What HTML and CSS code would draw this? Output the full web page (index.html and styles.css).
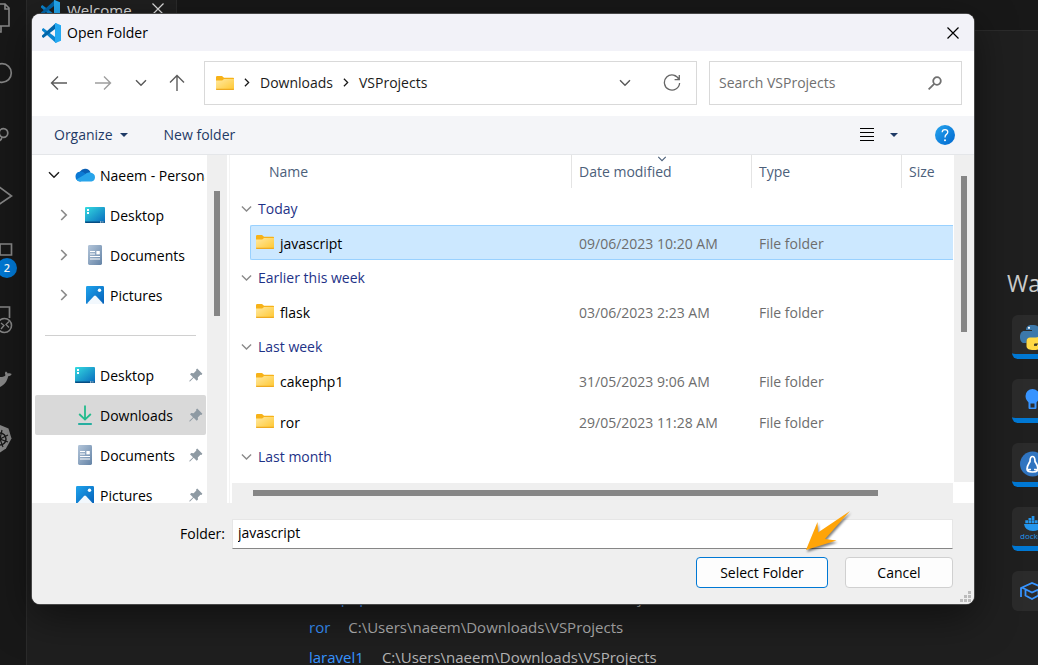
FILE: index.html
```html
<!DOCTYPE html>
<html lang="en">
<head>
	<meta charset="UTF-8">
	<title>Open Folder</title>
	<link rel="stylesheet" href="styles.css">
</head>
<body>
	<!-- shared icons -->
	<svg class="sprite" aria-hidden="true">
		<defs>
			<linearGradient id="gFolder" x1="0" y1="0" x2="1" y2="1"><stop offset="0" stop-color="#ffe9a2"/><stop offset="1" stop-color="#ffc730"/></linearGradient>
			<linearGradient id="gDesk" x1="0" y1="0" x2="1" y2="1"><stop offset="0" stop-color="#35dbe0"/><stop offset="1" stop-color="#0768bd"/></linearGradient>
			<linearGradient id="gDoc" x1="0" y1="0" x2="1" y2="1"><stop offset="0" stop-color="#b4c6da"/><stop offset="1" stop-color="#6483a6"/></linearGradient>
			<linearGradient id="gPic" x1="0" y1="0" x2="1" y2="1"><stop offset="0" stop-color="#1fa3ec"/><stop offset="1" stop-color="#0560b8"/></linearGradient>
			<linearGradient id="gHelp" x1="0" y1="0" x2="1" y2="1"><stop offset="0" stop-color="#27a5ee"/><stop offset="1" stop-color="#0067cf"/></linearGradient>
		</defs>
		<symbol id="vscode" viewBox="0 0 20 20">
			<path d="M1 6.2 2.3 5 16 15.6V19l-1.4.8L1 7.4z" fill="#0a84cf"/>
			<path d="M1 13.8 2.3 15 16 4.4V1L14.6.2 1 12.6z" fill="#0065a9"/>
			<path d="M14.6.1 20 2.2v15.6l-5.4 2.1c-.6 0-.9-.3-.6-.9V1c-.3-.6 0-.9.6-.9z" fill="#24a9f2"/>
		</symbol>
		<symbol id="folder" viewBox="0 0 18 14">
			<path d="M0 1.2Q0 0 1.2 0H6l2 1.8h9.2q.8 0 .8.8V5H0z" fill="#f7b218"/>
			<path d="M0 4.6h6.2L8 3h10v10q0 1-1 1H1q-1 0-1-1z" fill="url(#gFolder)"/>
			<path d="M0 12.8h18v.4q0 .8-.8.8H.8Q0 14 0 13.2z" fill="#eeaa22"/>
		</symbol>
		<symbol id="desktop" viewBox="0 0 20 20">
			<rect y="2" width="20" height="16" rx="1" fill="url(#gDesk)"/>
			<path d="M0 16.400h20v.6q0 1-1 1H1q-1 0-1-1z" fill="#064c82"/>
			<path d="M2 4h2v2H2zM2 7h2v2H2zM15 16.600h1.400v1H15zM17.400 16.600h1v1h-1z" fill="#fff"/>
		</symbol>
		<symbol id="document" viewBox="0 0 20 20">
			<rect x="3" y="0" width="14" height="20" rx="1.4" fill="url(#gDoc)"/>
			<path d="M5 6.500h5M5 9h5M5 11.500h10M5 14h10" stroke="#fff" stroke-width="1.100"/>
			<rect x="11.400" y="6" width="3.400" height="3.400" fill="#fff"/>
		</symbol>
		<symbol id="picture" viewBox="0 0 20 20">
			<rect x="1" y="1" width="18" height="18" rx="1.200" fill="url(#gPic)"/>
			<path d="M2 18.600 9 11q1-.9 2 0l7 7.600q-.3.4-1 .4H3q-.7 0-1-.4z" fill="#f2f8fd"/>
			<circle cx="14.500" cy="5.300" r="1.700" fill="#fff"/>
		</symbol>
		<symbol id="download" viewBox="0 0 20 20">
			<path d="M10 .5v13.600M4.200 9l5.800 5.600L15.800 9" fill="none" stroke="#22bb8c" stroke-width="1.800"/>
			<path d="M3.200 19h13.600" stroke="#12aa9a" stroke-width="1.800"/>
		</symbol>
		<symbol id="pin" viewBox="0 0 14 14">
			<path d="M8.200.6 13.400 5.800 12.400 7l-1-.2L8.800 9.400l.2 2.200-1.300 1.200-3-3L1 13.400H.4V12.800L4 9.200l-3-3L2.300 5l2.400.2L7.300 2.600 7.100 1.600z" fill="#8e9aa3"/>
		</symbol>
		<symbol id="chevDown" viewBox="0 0 12 8">
			<path d="M1 1.200 6 6.200 11 1.200" fill="none" stroke="currentColor" stroke-width="1.500"/>
		</symbol>
		<symbol id="chevRight" viewBox="0 0 8 12">
			<path d="M1.200 1 6.200 6 1.200 11" fill="none" stroke="currentColor" stroke-width="1.700"/>
		</symbol>
		<symbol id="caret" viewBox="0 0 8 4"><path d="M0 0h8L4 4z" fill="#1f3a66"/></symbol>
		<symbol id="cross" viewBox="0 0 12 12"><path d="M.5.5l11 11M11.500.5l-11 11" stroke="currentColor" stroke-width="1.200"/></symbol>
	</svg>

	<div class="window">
		<nav class="activity" aria-label="Activity bar">
			<svg viewBox="0 0 26 61"><path d="M0 21h5l4 4v18H0M5 21v5h4M1 43v6H0" fill="none" stroke="#868686" stroke-width="1.600"/></svg>
			<svg viewBox="0 0 26 61"><circle cx="2" cy="29" r="9.300" fill="none" stroke="#868686" stroke-width="1.700"/></svg>
			<svg viewBox="0 0 26 61"><circle cx="3.500" cy="28" r="4.300" fill="none" stroke="#868686" stroke-width="1.700"/><path d="M2 32q-.5 3-3 4" fill="none" stroke="#868686" stroke-width="1.700"/></svg>
			<svg viewBox="0 0 26 61"><path d="M-2 20 11.500 30-2 39" fill="none" stroke="#868686" stroke-width="1.700"/></svg>
			<svg viewBox="0 0 26 61"><path d="M0 17h11.500v11H0z" fill="none" stroke="#868686" stroke-width="1.700"/></svg>
			<svg viewBox="0 0 26 61"><path d="M0 19h9.500v11" fill="none" stroke="#868686" stroke-width="1.700"/><circle cx="4.500" cy="37.500" r="7" fill="#181818" stroke="#868686" stroke-width="1.600"/><path d="M1 35l3 2.500L1 41M9 33.500 6 36.500l3 3" fill="none" stroke="#868686" stroke-width="1.300"/></svg>
			<svg viewBox="0 0 26 61"><path d="M0 28c3 0 5-.5 5.500-2-1-1.500-.5-3 .5-3.500 1 .5 1.500 1.200 1.700 2 1.500-.5 3-.2 4 .5-.8 1.700-2 2.200-3.500 2.200C7 33 4 36 0 38z" fill="#868686"/></svg>
			<svg viewBox="0 0 26 61"><path d="M0 15l8.500 3.500 3 10-5.500 10-6 4z" fill="#868686"/><circle cx="0" cy="29" r="6" fill="none" stroke="#181818" stroke-width="1.500"/><path d="M0 29l8-4M0 29l8 3M0 29l3 8M0 29l2-9" stroke="#181818" stroke-width="1.200"/></svg>
			<span class="badge">2</span>
		</nav>
		<div class="editor">
			<header class="tabs">
				<div class="tab">
					<svg class="tab-logo"><use href="#vscode"/></svg>
					<span>Welcome</span>
					<button class="tab-close" aria-label="Close tab"><svg width="12" height="12"><use href="#cross"/></svg></button>
				</div>
			</header>
			<main class="welcome">
				<ul class="recent">
					<li><a href="#">cakephp1</a><span>C:\Users\naeem\Downloads\VSProjects</span></li>
					<li><a href="#">ror</a><span>C:\Users\naeem\Downloads\VSProjects</span></li>
					<li><a href="#">laravel1</a><span>C:\Users\naeem\Downloads\VSProjects</span></li>
				</ul>
				<section class="walk">
					<h2>Walkthroughs</h2>
					<div class="card started"><svg viewBox="0 0 30 30"><path d="M6 7c0-3.500 2-5 6-5s7 1 7 4v6c0 2-1 3-3 3h-6c-2.500 0-3.500 1.500-3.500 3.500V20H4c-2 0-4-2-4-6s2-6 4-6h8V7z" fill="#3c78aa"/><path d="M19.500 8.500h3c2 0 4 2 4 6s-2 6-4 6h-8v1h6v2c0 2.500-3 3.500-7 3.500s-7-1-7-4v-5c0-2 1.500-3.500 3.500-3.500h6c2.500 0 3.500-1.500 3.500-3z" fill="#ffd845"/><circle cx="9" cy="4.800" r="1.100" fill="#fff"/><path d="M14 22h3" stroke="#222" stroke-width="1.500"/></svg></div>
					<div class="card started"><svg viewBox="0 0 30 30"><path d="M5.500 9a7 7 0 0 1 14 0c0 3-1.500 4.500-3 6.500V21q0 1-1 1h-6q-1 0-1-1v-5.500C7 13.500 5.500 12 5.500 9z" fill="#3794ff"/><rect x="10.500" y="16.500" width="4" height="4" fill="#2b2b2b"/></svg></div>
					<div class="card started"><svg viewBox="0 0 30 30"><circle cx="12.500" cy="13" r="12.500" fill="#2f74c0"/><path d="M12.500 5.500c-2.500 0-2.500 3-2.500 5-1 2-3 4-3 7.500 0 1.500 1.500 3 5.500 3s5.500-1.500 5.500-3c0-3.500-2-5.500-3-7.500 0-2 0-5-2.500-5zM8 18.500h3M14 18.500h3" fill="none" stroke="#fff" stroke-width="1.700"/></svg></div>
					<div class="card started"><svg viewBox="0 0 30 30"><path d="M4 9h16q1 0 2-1-1 8-9 8-8 0-9-7z" fill="#2396ed"/><path d="M5.300 5.300h2.700v2.900H5.300zM8.500 5.300h2.700v2.900H8.500zM11.700 5.300h2.700v2.900h-2.700zM14.900 5.300h2.700v2.900h-2.700zM8.500 3h2.700v2H8.500zM11.700 1h2.700v4h-2.700z" fill="#2396ed"/><text x="0" y="24" class="mini">docker</text></svg></div>
					<div class="card"><svg viewBox="0 0 30 30"><path d="M2 8.500 12 4l11 4.500-11 5zM5.500 11v5.500l6.500 3.500 6.500-3.500V11M1 8.500V18" fill="none" stroke="#3794ff" stroke-width="1.800"/></svg></div>
				</section>
			</main>
		</div>
	</div>

	<div class="dialog" role="dialog" aria-labelledby="dialogTitle">
		<header class="titlebar">
			<svg width="20" height="20"><use href="#vscode"/></svg>
			<h1 id="dialogTitle">Open Folder</h1>
			<button aria-label="Close"><svg width="12" height="12"><use href="#cross"/></svg></button>
		</header>

		<div class="navbar">
			<button class="wide" aria-label="Back"><svg width="18" height="16" viewBox="0 0 18 16"><path d="M17 8H1.500M8 1.500 1.500 8 8 14.500" fill="none" stroke="#5c5c5c" stroke-width="1.400"/></svg></button>
			<button class="wide" aria-label="Forward"><svg width="18" height="16" viewBox="0 0 18 16"><path d="M1 8h15.500M10 1.500 16.500 8 10 14.500" fill="none" stroke="#9e9e9e" stroke-width="1.400"/></svg></button>
			<button aria-label="Recent locations"><svg width="12" height="8"><use href="#chevDown"/></svg></button>
			<button class="up" aria-label="Up"><svg width="16" height="18" viewBox="0 0 16 18"><path d="M8 17V1.500M1 8.500l7-7 7 7" fill="none" stroke="#5c5c5c" stroke-width="1.400"/></svg></button>
			<div class="address">
				<svg width="18" height="14"><use href="#folder"/></svg>
				<svg class="sep" viewBox="0 0 8 12"><use href="#chevRight"/></svg>
				<a href="#">Downloads</a>
				<svg class="sep" viewBox="0 0 8 12"><use href="#chevRight"/></svg>
				<a href="#">VSProjects</a>
				<button class="drop" aria-label="Previous locations"><svg width="14" height="8"><use href="#chevDown"/></svg></button>
				<button aria-label="Refresh"><svg width="18" height="18" viewBox="0 0 18 18"><path d="M16 5.500A7.600 7.600 0 1 0 16.600 9M16.300 1v4.700h-4.700" fill="none" stroke="#666" stroke-width="1.300"/></svg></button>
			</div>
			<div class="search">
				<input type="text" placeholder="Search VSProjects" aria-label="Search VSProjects">
				<svg width="14" height="14" viewBox="0 0 14 14"><circle cx="9" cy="5" r="3.800" fill="none" stroke="#707070" stroke-width="1.800"/><path d="M6.200 7.800.6 13.400" stroke="#707070" stroke-width="1.800"/></svg>
			</div>
		</div>

		<div class="toolbar">
			<button>Organize <svg width="8" height="4"><use href="#caret"/></svg></button>
			<button class="new">New folder</button>
			<button class="view" aria-label="Change view"><svg width="14" height="14" viewBox="0 0 14 14"><path d="M0 .5h14M0 4.500h14M0 8.500h14M0 12.500h14" stroke="#000"/></svg></button>
			<button class="more" aria-label="More options"><svg width="8" height="4"><use href="#caret"/></svg></button>
			<button class="help" aria-label="Help"><svg width="20" height="20" viewBox="0 0 20 20"><circle cx="10" cy="10" r="10" fill="url(#gHelp)"/><path d="M7.200 7.300q0-2.700 2.800-2.700t2.800 2.500q0 1.300-1.400 2.300T10 12.500" fill="none" stroke="#fff" stroke-width="1.300"/><circle cx="10" cy="15.200" r="1" fill="#fff"/></svg></button>
		</div>

		<div class="content">
			<nav class="tree" aria-label="Folders">
				<a href="#" class="root"><svg class="arrow open"><use href="#chevDown"/></svg>
					<svg class="icon" viewBox="0 0 20 20"><path d="M5 6.500a6 6 0 0 1 10.500.8L11 12 2 14z" fill="#0a5fb4"/><path d="M4.500 6.800Q7 6 9.500 8L14 12l-8.500 4.500H5A4.900 4.900 0 0 1 4.500 6.800z" fill="#0b79d4"/><path d="M9 10q3-3 6.500-2.600Q20 8.500 20 12.200q-.2 3.800-3.500 4.300H5Q2.500 16.500 1.300 14.500z" fill="#28a4ea"/></svg>
					<span>Naeem - Personal</span></a>
				<a href="#" class="child"><svg class="arrow"><use href="#chevRight"/></svg><svg class="icon"><use href="#desktop"/></svg><span>Desktop</span></a>
				<a href="#" class="child"><svg class="arrow"><use href="#chevRight"/></svg><svg class="icon"><use href="#document"/></svg><span>Documents</span></a>
				<a href="#" class="child"><svg class="arrow"><use href="#chevRight"/></svg><svg class="icon"><use href="#picture"/></svg><span>Pictures</span></a>
				<hr>
				<a href="#" class="pinned"><svg class="icon"><use href="#desktop"/></svg><span>Desktop</span><svg class="pin"><use href="#pin"/></svg></a>
				<a href="#" class="pinned selected"><svg class="icon"><use href="#download"/></svg><span>Downloads</span><svg class="pin"><use href="#pin"/></svg></a>
				<a href="#" class="pinned"><svg class="icon"><use href="#document"/></svg><span>Documents</span><svg class="pin"><use href="#pin"/></svg></a>
				<a href="#" class="pinned"><svg class="icon"><use href="#picture"/></svg><span>Pictures</span><svg class="pin"><use href="#pin"/></svg></a>
			</nav>
			<div class="vscroll tree-scroll"><div class="thumb"></div></div>
			<div class="files">
				<table>
					<colgroup><col class="c-indent"><col><col class="c-date"><col class="c-type"><col class="c-size"></colgroup>
					<thead>
						<tr><th colspan="2" class="name">Name</th><th class="sorted"><svg class="sort"><use href="#chevDown"/></svg>Date modified</th><th>Type</th><th>Size</th></tr>
					</thead>
					<tbody>
						<tr class="group"><td colspan="5"><svg><use href="#chevDown"/></svg>Today</td></tr>
						<tr class="item selected"><td></td><td class="file"><svg><use href="#folder"/></svg>javascript</td><td>09/06/2023 10:20 AM</td><td>File folder</td><td></td></tr>
						<tr class="group"><td colspan="5"><svg><use href="#chevDown"/></svg>Earlier this week</td></tr>
						<tr class="item"><td></td><td class="file"><svg><use href="#folder"/></svg>flask</td><td>03/06/2023 2:23 AM</td><td>File folder</td><td></td></tr>
						<tr class="group"><td colspan="5"><svg><use href="#chevDown"/></svg>Last week</td></tr>
						<tr class="item"><td></td><td class="file"><svg><use href="#folder"/></svg>cakephp1</td><td>31/05/2023 9:06 AM</td><td>File folder</td><td></td></tr>
						<tr class="item"><td></td><td class="file"><svg><use href="#folder"/></svg>ror</td><td>29/05/2023 11:28 AM</td><td>File folder</td><td></td></tr>
						<tr class="group"><td colspan="5"><svg><use href="#chevDown"/></svg>Last month</td></tr>
					</tbody>
				</table>
				<div class="hscroll"><div class="thumb"></div></div>
			</div>
			<div class="vscroll files-scroll"><div class="thumb"></div></div>
		</div>

		<footer class="footer">
			<div class="field">
				<label for="folderName">Folder:</label>
				<input type="text" id="folderName" value="javascript">
			</div>
			<div class="actions">
				<button class="primary">Select Folder</button>
				<button class="cancel">Cancel</button>
			</div>
			<svg class="grip" viewBox="0 0 11 11"><path d="M8 0h3v3H8zM4 4h3v3H4zM8 4h3v3H8zM0 8h3v3H0zM4 8h3v3H4zM8 8h3v3H8z" fill="#bcbcbc"/></svg>
			<svg class="pointer" viewBox="0 0 46 42"><path d="M0 39 11.500 11l.5 10.500L44 0 19 28l11.500 1.500z" fill="#ffa408"/></svg>
		</footer>
	</div>
</body>
</html>
```

FILE: styles.css
```css
* {
	box-sizing: border-box;
}
body {
	margin: 0;
	height: 100vh;
	overflow: hidden;
	background: #1f1f1f;
	font-family: "Open Sans", "Noto Sans", sans-serif;
	font-size: 14px;
	line-height: 20px;
	color: #000;
}
button, input {
	font: inherit;
	color: inherit;
	margin: 0;
	padding: 0;
	border: 0;
	background: none;
}
a {
	color: inherit;
	text-decoration: none;
}
svg {
	display: block;
	flex: none;
}
.sprite {
	position: absolute;
	width: 0;
	height: 0;
}

/* editor behind the dialog */
.window {
	display: flex;
	height: 100vh;
}
.activity {
	position: relative;
	flex: none;
	width: 27px;
	overflow: hidden;
	background: #181818;
	border-right: 1px solid #2b2b2b;
}
.activity svg {
	width: 26px;
	height: 61px;
}
.activity svg:first-child {
	margin-top: -17px;
}
.badge {
	position: absolute;
	left: -3px;
	top: 258px;
	width: 20px;
	height: 20px;
	border-radius: 50%;
	background: #0078d4;
	color: #fff;
	font-size: 11px;
	font-weight: 600;
	text-align: center;
}
.editor {
	flex: 1;
	min-width: 0;
	display: flex;
	flex-direction: column;
}
.tabs {
	display: flex;
	height: 31px;
	background: #181818;
	border-bottom: 1px solid #2b2b2b;
}
.tab {
	display: flex;
	width: 150px;
	height: 31px;
	padding: 0 12px 0 13px;
	background: #1f1f1f;
	border-right: 1px solid #2b2b2b;
	font-size: 15px;
	color: #e0e0e0;
}
.tab-logo {
	width: 20px;
	height: 20px;
	margin-right: 7px;
}
.tab-close {
	height: 18px;
	margin-left: auto;
	color: #e0e0e0;
}
.welcome {
	flex: 1;
	display: flex;
	justify-content: space-between;
	padding-left: 282px;
	overflow: hidden;
}
.recent {
	margin: 551px 0 0;
	padding: 0;
	list-style: none;
	font-size: 15px;
	line-height: 30px;
	color: #b4b4b4;
}
.recent a {
	margin-right: 18px;
	color: #3794ff;
}
.walk {
	width: 31px;
	padding-top: 236px;
}
.walk h2 {
	margin: 0 0 16px;
	font-size: 23px;
	line-height: 32px;
	font-weight: 400;
	color: #ccc;
}
.card {
	width: 200px;
	height: 40px;
	margin: 0 0 20px 5px;
	padding: 8px;
	border-radius: 6px;
	overflow: hidden;
	background: #2b2b2b;
}
.card.started {
	height: 44px;
	border-bottom: 5px solid #0078d4;
}
.card svg {
	width: 30px;
	height: 30px;
}
.mini {
	font-size: 8px;
	fill: #2396ed;
}

/* dialog */
.dialog {
	position: absolute;
	top: 14px;
	left: 32px;
	right: 64px;
	border-radius: 8px;
	overflow: hidden;
	background: #fff;
	box-shadow: 0 0 0 1px #484848, 0 12px 40px rgba(0, 0, 0, 0.5);
}
.titlebar {
	display: flex;
	align-items: center;
	height: 37px;
	padding: 0 15px 0 9px;
	background: #f2f2f8;
}
.titlebar h1 {
	flex: 1;
	margin: 0 0 0 6px;
	font-size: 14px;
	font-weight: 400;
}
.navbar {
	display: flex;
	align-items: center;
	height: 65px;
	padding: 0 12px 2px 5px;
	color: #5c5c5c;
}
.navbar button {
	display: flex;
	justify-content: center;
	width: 32px;
}
.navbar .wide {
	width: 44px;
}
.navbar .up {
	width: 40px;
	margin-right: 7px;
}
.address, .search {
	display: flex;
	align-items: center;
	height: 44px;
	border: 1px solid #d9d9d9;
}
.address {
	flex: 1;
	padding: 0 8px 0 11px;
	color: #1b1b1b;
}
.address .sep {
	width: 6px;
	height: 9px;
	margin: 0 10px;
}
.address button {
	color: #5c5c5c;
}
.address .drop {
	margin-left: auto;
	margin-right: 15px;
}
.search {
	width: 253px;
	margin-left: 12px;
	padding: 0 19px 0 9px;
}
.search input {
	flex: 1;
	min-width: 0;
}
.search input::placeholder {
	color: #707070;
}
.toolbar {
	display: flex;
	align-items: center;
	height: 39px;
	padding: 0 19px 0 22px;
	background: #f4f5f8;
	border-bottom: 1px solid #e4e6e9;
	color: #1f3a66;
}
.toolbar button {
	display: flex;
	align-items: center;
	gap: 7px;
}
.toolbar .new {
	margin-left: 36px;
}
.toolbar .view {
	margin-left: auto;
}
.toolbar .more {
	margin: 0 37px 0 16px;
}

.content {
	display: flex;
	height: 348px;
}
.tree {
	flex: none;
	width: 175px;
	overflow: hidden;
}
.tree a {
	display: flex;
	align-items: center;
	height: 40px;
	white-space: nowrap;
}
.tree span {
	padding-top: 2px;
}
.tree .root {
	padding-left: 16px;
	margin-right: 2px;
	overflow: hidden;
}
.tree .child {
	padding-left: 28px;
}
.tree .pinned {
	margin: 0 1px 0 3px;
	padding: 0 3px 0 40px;
	border-radius: 2px;
}
.tree .selected {
	background: #d9d9d9;
}
.arrow {
	width: 8px;
	height: 12px;
	margin-right: 17px;
	color: #8a8a8a;
}
.arrow.open {
	width: 12px;
	height: 8px;
	margin-right: 15px;
	color: #222;
}
.icon {
	width: 20px;
	height: 20px;
	margin-right: 5px;
}
.pin {
	width: 14px;
	height: 14px;
	margin-left: auto;
}
.tree hr {
	height: 1px;
	margin: 20px 11px 19px 13px;
	border: 0;
	background: #d0d0d0;
}
.vscroll {
	flex: none;
	width: 20px;
	background: #efefef;
}
.thumb {
	background: #868686;
}
.vscroll .thumb {
	width: 6px;
	margin-left: 7px;
}
.tree-scroll .thumb {
	height: 125px;
	margin-top: 36px;
}
.files-scroll {
	height: 327px;
}
.files-scroll .thumb {
	height: 156px;
	margin-top: 21px;
}

.files {
	flex: 1;
	min-width: 0;
	display: flex;
	flex-direction: column;
	margin-left: 2px;
	padding-right: 1px;
	border-left: 1px solid #f3f3f3;
}
.files table {
	width: 100%;
	table-layout: fixed;
	border-collapse: separate;
	border-spacing: 0;
}
.c-indent {
	width: 20px;
}
.c-date {
	width: 180px;
}
.c-type {
	width: 150px;
}
.c-size {
	width: 52px;
}
.files th {
	position: relative;
	height: 33px;
	padding: 0 0 0 7px;
	border-left: 1px solid #e4e4e4;
	font-weight: 400;
	text-align: left;
	color: #4c607a;
}
.files th.name {
	padding-left: 39px;
	border-left: 0;
}
/* sort mark sits on the top edge of the header */
.sort {
	position: absolute;
	top: 1px;
	left: 85px;
	width: 10px;
	height: 6px;
}
.files td {
	height: 35px;
	padding: 2px 0 0 8px;
	color: #6d6d6d;
}
.files .group td {
	height: 34px;
	padding-left: 11px;
	color: #1e3287;
}
.files tbody tr:first-child td {
	height: 37px;
	padding-top: 5px;
}
.group svg {
	display: inline-block;
	width: 11px;
	height: 8px;
	margin-right: 6px;
	vertical-align: 1px;
	color: #8a8a8a;
}
.files td.file {
	padding-left: 6px;
	color: #000;
}
.file svg {
	display: inline-block;
	width: 18px;
	height: 14px;
	margin-right: 6px;
	vertical-align: 0;
}
.files .item + .item td {
	height: 41px;
	padding-top: 8px;
}
.item.selected td + td {
	background: #cce8ff;
	border: solid #99d1ff;
	border-width: 1px 0;
}
.item.selected td.file {
	padding-left: 5px;
	border-left-width: 1px;
	border-radius: 2px 0 0 2px;
}
.hscroll {
	height: 20px;
	margin: auto 0 0 2px;
	padding: 7px 75px 0 21px;
	background: #efefef;
}
.hscroll .thumb {
	height: 6px;
}

.footer {
	position: relative;
	padding: 16px 21px 16px 148px;
	background: #efefef;
}
.field {
	display: flex;
	align-items: center;
	gap: 7px;
}
.field input {
	flex: 1;
	height: 30px;
	padding: 0 5px 3px;
	background: #fff;
	border: 1px solid #e6e6e6;
	border-bottom-color: #868686;
}
.actions {
	display: flex;
	justify-content: flex-end;
	gap: 17px;
	margin-top: 8px;
}
.actions button {
	width: 108px;
	height: 31px;
	background: #fdfdfd;
	border: 1px solid #d0d0d0;
	border-radius: 4px;
}
.actions .primary {
	width: 132px;
	border-color: #0078d4;
}
.grip {
	position: absolute;
	right: 3px;
	bottom: 2px;
	width: 11px;
	height: 11px;
}
.pointer {
	position: absolute;
	right: 122px;
	top: 8px;
	width: 46px;
	height: 42px;
	filter: drop-shadow(1px 2px 1px rgba(0, 0, 0, 0.5));
}
```
